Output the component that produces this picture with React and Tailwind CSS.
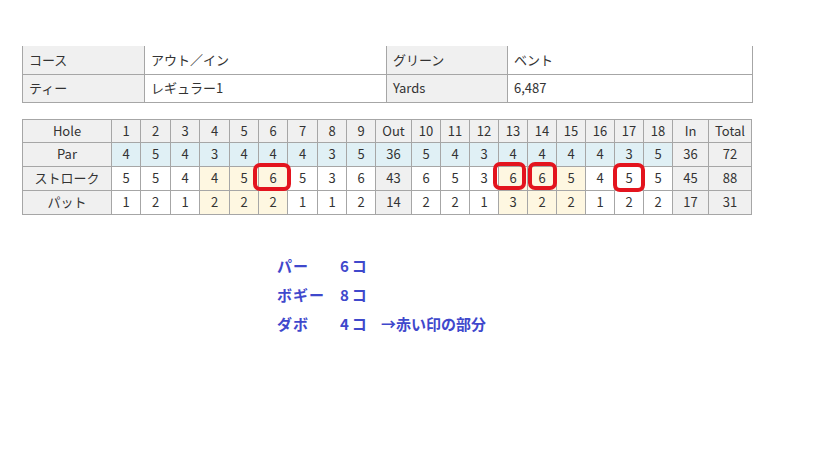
import React from 'react';

const holes = [1, 2, 3, 4, 5, 6, 7, 8, 9, 10, 11, 12, 13, 14, 15, 16, 17, 18];
const par = [4, 5, 4, 3, 4, 4, 4, 3, 5, 5, 4, 3, 4, 4, 4, 4, 3, 5];
const stroke = [5, 5, 4, 4, 5, 6, 5, 3, 6, 6, 5, 3, 6, 6, 5, 4, 5, 5];
const putt = [1, 2, 1, 2, 2, 2, 1, 1, 2, 2, 2, 1, 3, 2, 2, 1, 2, 2];
const yellow = [4, 5, 6, 13, 14, 15];
// hand-drawn red marks, each a little different
const marks = {
    6: '-left-[6px] -right-[4px] -top-[4px] -bottom-[1px]',
    13: '-left-[6px] right-[1px] -top-[5px] bottom-0',
    14: 'left-0 -right-[1px] -top-[5px] bottom-0',
    17: '-left-[2px] -right-[2px] -top-[4px] -bottom-[2px]',
};
const holeW = [29, 30, 29, 30, 29, 29, 30, 29, 29, 29, 29, 29, 29, 29, 29, 29, 29, 29];

const cell = 'border border-[#a6a6a6] text-center text-[13px] text-[#333] p-0';

const Mark = ({ pos }) => (
    <span className={`absolute z-10 ${pos} border-4 border-[#e3141e] rounded-[7px]`}></span>
);

const ScoreRow = ({ label, values, total, out, inn, kind }) => {
    const front = values.slice(0, 9);
    const back = values.slice(9);
    const bg = (h) => {
        if (kind === 'par') return 'bg-[#e0f0f5]';
        if (yellow.includes(h)) return 'bg-[#fef7e1]';
        return 'bg-white';
    };
    const td = (v, i) => {
        const h = i + 1;
        return (
            <td key={h} className={`${cell} ${bg(h)} relative`}>
                {kind === 'stroke' && marks[h] && <Mark pos={marks[h]} />}
                {v}
            </td>
        );
    };
    return (
        <tr className="h-[24px]">
            <td className={`${cell} bg-[#f0f0f0]`}>{label}</td>
            {front.map((v, i) => td(v, i))}
            <td className={`${cell} ${kind === 'par' ? 'bg-[#e0f0f5]' : 'bg-[#f0f0f0]'}`}>{out}</td>
            {back.map((v, i) => td(v, i + 9))}
            <td className={`${cell} bg-[#f0f0f0]`}>{inn}</td>
            <td className={`${cell} bg-[#f0f0f0]`}>{total}</td>
        </tr>
    );
};

const App = () => {
    const sum = (a) => a.reduce((s, v) => s + v, 0);
    return (
        <div
            className="w-[819px] h-[460px] bg-white pt-[46px] pl-[22px]"
            style={{ fontFamily: '"Noto Sans CJK JP", sans-serif' }}
        >
            {/* Course info */}
            <table className="w-[730px] border-collapse table-fixed text-[13px] text-[#333]">
                <colgroup>
                    <col className="w-[122px]" />
                    <col className="w-[242px]" />
                    <col className="w-[121px]" />
                    <col className="w-[245px]" />
                </colgroup>
                <tbody>
                    <tr className="h-[28px]">
                        <td className="border-x border-b border-[#a6a6a6] bg-[#f0f0f0] px-[6px]">コース</td>
                        <td className="border-x border-b border-[#a6a6a6] px-[6px]">アウト／イン</td>
                        <td className="border-x border-b border-[#a6a6a6] bg-[#f0f0f0] px-[6px]">グリーン</td>
                        <td className="border-x border-b border-[#a6a6a6] px-[6px]">ベント</td>
                    </tr>
                    <tr className="h-[28px]">
                        <td className="border border-[#a6a6a6] bg-[#f0f0f0] px-[6px]">ティー</td>
                        <td className="border border-[#a6a6a6] px-[6px]">レギュラー1</td>
                        <td className="border border-[#a6a6a6] bg-[#f0f0f0] px-[6px]">Yards</td>
                        <td className="border border-[#a6a6a6] px-[6px]">6,487</td>
                    </tr>
                </tbody>
            </table>

            {/* Score card */}
            <table className="mt-[16px] w-[730px] border-collapse table-fixed">
                <colgroup>
                    <col className="w-[89px]" />
                    {holeW.slice(0, 9).map((w, i) => (
                        <col key={i} style={{ width: w }} />
                    ))}
                    <col className="w-[36px]" />
                    {holeW.slice(9).map((w, i) => (
                        <col key={i + 9} style={{ width: w }} />
                    ))}
                    <col className="w-[36px]" />
                    <col className="w-[43px]" />
                </colgroup>
                <tbody>
                    <tr className="h-[23px]">
                        <td className={`${cell} bg-[#f0f0f0]`}>Hole</td>
                        {holes.slice(0, 9).map((h) => (
                            <td key={h} className={`${cell} bg-[#f0f0f0]`}>{h}</td>
                        ))}
                        <td className={`${cell} bg-[#f0f0f0]`}>Out</td>
                        {holes.slice(9).map((h) => (
                            <td key={h} className={`${cell} bg-[#f0f0f0]`}>{h}</td>
                        ))}
                        <td className={`${cell} bg-[#f0f0f0]`}>In</td>
                        <td className={`${cell} bg-[#f0f0f0]`}>Total</td>
                    </tr>
                    <ScoreRow label="Par" values={par} kind="par" out={36} inn={36} total={72} />
                    <ScoreRow label="ストローク" values={stroke} kind="stroke" out={43} inn={45} total={88} />
                    <ScoreRow label="パット" values={putt} kind="putt" out={14} inn={17} total={sum(putt)} />
                </tbody>
            </table>

            {/* Summary */}
            <div className="mt-[41px] ml-[255px] flex flex-col gap-[9px] text-[15px] font-bold text-[#3f48cc] leading-[20px]">
                <div className="flex">
                    <span className="w-[63px] tracking-[1px]">パー</span>
                    <span className="tracking-[3px]">6コ</span>
                </div>
                <div className="flex">
                    <span className="w-[63px] tracking-[1px]">ボギー</span>
                    <span className="tracking-[3px]">8コ</span>
                </div>
                <div className="flex">
                    <span className="w-[63px] tracking-[1px]">ダボ</span>
                    <span className="w-[41px] tracking-[3px]">4コ</span>
                    <span>→赤い印の部分</span>
                </div>
            </div>
        </div>
    );
};

export default App;
